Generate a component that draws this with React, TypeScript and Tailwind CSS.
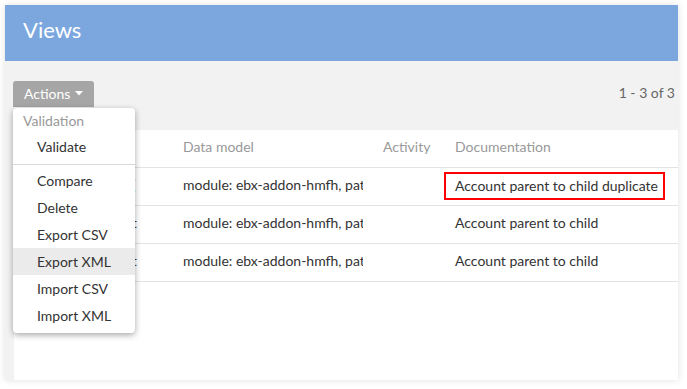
import React from "react";

const font = { fontFamily: "Lato, 'Open Sans', sans-serif" };

function Caret() {
  return (
    <svg width="8" height="5" viewBox="0 0 8 5" className="ml-[5px]">
      <path d="M0 0 L8 0 L4 4.5 Z" fill="#ffffff" />
    </svg>
  );
}

const rows = [
  { first: "Account parent (", doc: "Account parent to child duplicate", boxed: true },
  { first: "Account parent t", doc: "Account parent to child", boxed: false },
  { first: "Account parent t", doc: "Account parent to child", boxed: false },
];

export default function App() {
  return (
    <div className="w-[687px] h-[389px] bg-white pt-[5px] pl-[5px]" style={font}>
      <div className="w-[673px] h-[375px] flex flex-col shadow-[0_0_7px_rgba(0,0,0,0.13)]">
        <div className="h-[56px] bg-[#7ba7de] flex items-center pl-[18px] pb-[6px] shrink-0">
          <span className="text-[22px] text-white leading-none">Views</span>
        </div>
        <div className="flex-1 bg-[#f2f2f2] pl-[9px] flex flex-col">
          <div className="h-[69px] relative flex items-start justify-between pt-[20px] shrink-0">
            <button className="ml-[-1px] h-[26px] px-[11px] pb-[2px] bg-[#a6a6a6] rounded-t-[3px] flex items-center text-white text-[14px]">
              Actions
              <Caret />
            </button>
            <span className="text-[14px] text-[#666] pr-[3px] mt-[1px]">1 - 3 of 3</span>
            <div className="absolute left-[-1px] top-[47px] w-[122px] bg-white rounded-[4px] shadow-[0_2px_6px_rgba(0,0,0,0.35)] z-10 pb-[4px] text-[14px]">
              <div className="h-[25px] flex items-center pl-[10px] text-[#999]">Validation</div>
              <div className="h-[27px] flex items-center pl-[24px] text-[#333]">Validate</div>
              <div className="mt-[4px] mb-[2px] h-px bg-[#d9d9d9]" />
              {["Compare", "Delete", "Export CSV", "Export XML", "Import CSV", "Import XML"].map((t) => (
                <div
                  key={t}
                  className={
                    t === "Export XML"
                      ? "h-[27px] flex items-center pl-[24px] text-[#333] bg-[#ebebeb]"
                      : "h-[27px] flex items-center pl-[24px] text-[#333]"
                  }
                >
                  {t}
                </div>
              ))}
            </div>
          </div>
          <div className="flex-1 bg-white text-[14px]">
            <div className="grid grid-cols-[149px_200px_72px_1fr] h-[38px] border-b border-[#e3e3e3] text-[#999]">
              <div className="pl-[20px] pb-[4px] flex items-center overflow-hidden whitespace-nowrap">
                <span className="block w-[103px] overflow-hidden">Identifier</span>
              </div>
              <div className="pl-[20px] pb-[4px] flex items-center">Data model</div>
              <div className="pl-[20px] pb-[4px] flex items-center">Activity</div>
              <div className="pl-[20px] pb-[4px] flex items-center">Documentation</div>
            </div>
            {rows.map((r, i) => (
              <div
                key={i}
                className="grid grid-cols-[149px_200px_72px_1fr] h-[38px] border-b border-[#e3e3e3] text-[#333]"
              >
                <div className="pl-[20px] pb-[4px] flex items-center whitespace-nowrap">
                  <span className="block w-[103px] overflow-hidden">{r.first}</span>
                </div>
                <div className="pl-[20px] pb-[4px] flex items-center whitespace-nowrap overflow-hidden">
                  module: ebx-addon-hmfh, path: /WEB-INF/ebx/schema
                </div>
                <div className="pl-[20px] flex items-center" />
                {r.boxed ? (
                  <div className="flex items-center pl-[9px] pb-[1px]">
                    <div className="w-[221px] h-[28px] border-2 border-[#ff0000] pl-[9px] pb-[2px] flex items-center whitespace-nowrap">
                      {r.doc}
                    </div>
                  </div>
                ) : (
                  <div className="pl-[20px] pb-[4px] flex items-center whitespace-nowrap">{r.doc}</div>
                )}
              </div>
            ))}
          </div>
        </div>
      </div>
    </div>
  );
}
